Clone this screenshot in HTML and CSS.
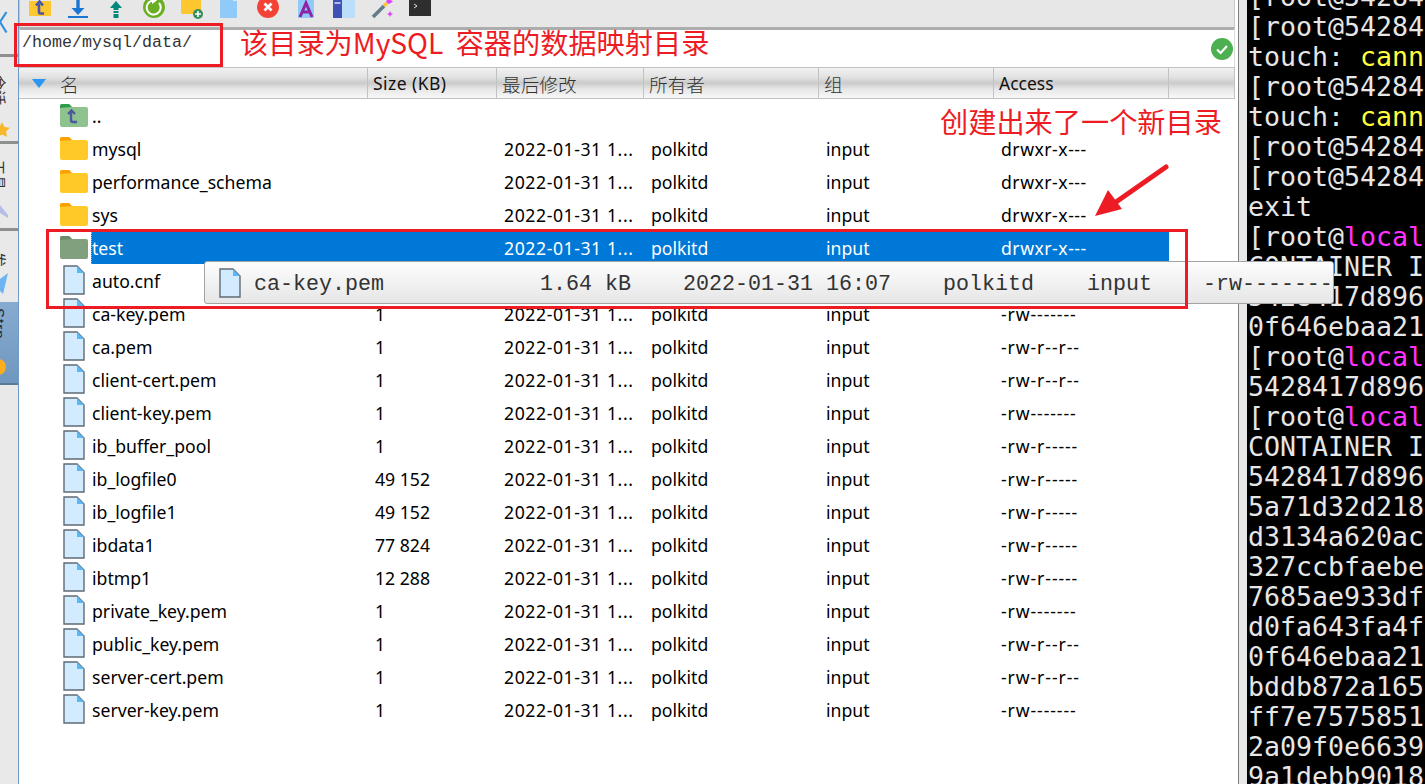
FILE: index.html
```html
<!DOCTYPE html>
<html lang="zh">
<head>
<meta charset="utf-8">
<title>FinalShell</title>
<link rel="stylesheet" href="styles.css">
</head>
<body>
<div class="app">
  <aside class="sidebar">
    <div class="tab tab-top">
      <svg class="tab-chevron" width="8" height="26" viewBox="0 0 8 26"><path d="M6.5 1 L0 11 L6.5 21.5" fill="none" stroke="#2f8fe0" stroke-width="2.2"/></svg>
    </div>
    <div class="tab tab-a">
      <span class="tab-label">会话</span>
      <svg class="tab-icon" width="14" height="18" viewBox="0 0 14 18"><path d="M2 0 L4.5 5 L10 5.8 L6 9.6 L7 15 L2 12.4 L-3 15 L-2 9.6 L-6 5.8 L-.5 5 Z" fill="#f7b928"/></svg>
    </div>
    <div class="tab tab-b">
      <span class="tab-label">工具</span>
      <svg class="tab-icon" width="18" height="22" viewBox="0 0 18 22"><path d="M0 2 L8 12 L8 15 L0 10 Z" fill="#b3bfe6"/></svg>
    </div>
    <div class="tab tab-c">
      <span class="tab-label">发</span>
      <svg class="tab-icon" width="18" height="24" viewBox="0 0 18 24"><path d="M8 1 L3 22 L0 19 L0 7 Z" fill="#6db4f2"/></svg>
    </div>
    <div class="tab-active">
      <span class="tab-label tab-label-latin">Strp</span>
      <span class="tab-dot"></span>
    </div>
  </aside>

  <main class="main">
    <div class="toolbar">
      <svg class="tool" width="22" height="22" viewBox="0 0 22 22"><path d="M0 5 H22 V19 a1 1 0 0 1 -1 1 H1 a1 1 0 0 1 -1 -1 Z" fill="#fdc82f"/><path d="M10 8 V16 a1.5 1.5 0 0 0 1.5 1.5 H15 M7 9.5 L10.5 5.5 L14 9.5" fill="none" stroke="#4a55a8" stroke-width="2.6"/></svg>
      <svg class="tool" width="22" height="22" viewBox="0 0 22 22"><path d="M11 3 V16" stroke="#1976d2" stroke-width="3.4"/><path d="M4.5 12 H17.5 L11 19 Z" fill="#1976d2"/><path d="M1 21 H21" stroke="#1976d2" stroke-width="2"/></svg>
      <svg class="tool" width="22" height="22" viewBox="0 0 22 22"><path d="M5 12 L11 5 L17 12 Z" fill="#00897b"/><path d="M8.5 12 H13.5 V14 H8.5 Z M8.5 15 H13.5 V17 H8.5 Z M8.5 18 H13.5 V22 H8.5 Z" fill="#00897b"/></svg>
      <svg class="tool" width="22" height="22" viewBox="0 0 22 22"><circle cx="11" cy="11" r="11" fill="#6aaf23"/><path d="M16 7 A7 7 0 1 1 10 4.6" fill="none" stroke="#fff" stroke-width="2"/><path d="M9 1 L14 4.6 L9 8 Z" fill="#fff"/></svg>
      <svg class="tool" width="22" height="22" viewBox="0 0 22 22"><path d="M0 0 H20 V17 a1 1 0 0 1 -1 1 H1 a1 1 0 0 1 -1 -1 Z" fill="#fdc82f"/><circle cx="17" cy="18" r="5" fill="#388e5a"/><path d="M14 18 H20 M17 15 V21" stroke="#fff" stroke-width="1.6"/></svg>
      <svg class="tool" width="22" height="22" viewBox="0 0 22 22"><path d="M1 0 H14 L18 5 V22 H1 Z" fill="#90caf9"/><path d="M14 0 L18 5 H14 Z" fill="#d5ebfc"/></svg>
      <svg class="tool" width="22" height="22" viewBox="0 0 22 22"><circle cx="11" cy="11" r="11" fill="#f44336"/><path d="M7.5 7.5 L14.5 14.5 M14.5 7.5 L7.5 14.5" stroke="#fff" stroke-width="2.8"/></svg>
      <svg class="tool" width="22" height="22" viewBox="0 0 22 22"><path d="M3 0 H16 L19 5 V22 H3 Z" fill="#90caf9"/><path d="M5 21 L11 7 L17 21 M7.5 16 H14.5" fill="none" stroke="#8e24aa" stroke-width="3"/></svg>
      <svg class="tool" width="22" height="22" viewBox="0 0 22 22"><rect x="0" y="0" width="22" height="22" fill="#bbdefb"/><rect x="0" y="0" width="9" height="22" fill="#3f51b5"/><path d="M1.5 7 H7.5" stroke="#fff" stroke-width="1.2"/></svg>
      <svg class="tool" width="22" height="22" viewBox="0 0 22 22"><path d="M2 21 L13 10" stroke="#607d8b" stroke-width="3.6"/><path d="M13 10 L16 7" stroke="#fdc82f" stroke-width="3.6"/><path d="M18 0 L19.5 4 L22 5.5 L18 8 L15 6 Z M19 15 L20 17 L22 18 L20 19 L19 21 L18 19 L16 18 L18 17 Z" fill="#e040fb"/></svg>
      <svg class="tool" width="22" height="22" viewBox="0 0 22 22"><rect x="0" y="0" width="22" height="20" fill="#2e2e2e"/><path d="M5 8 L8 10 L5 12" fill="none" stroke="#ddd" stroke-width="1"/></svg>
    </div>

    <div class="pathbar">
      <span class="path-text">/home/mysql/data/</span>
      <svg class="status" width="22" height="22" viewBox="0 0 22 22"><circle cx="11" cy="11" r="11" fill="#4caf50"/><path d="M6 11.5 L9.6 15 L16 8" fill="none" stroke="#fff" stroke-width="2.2"/></svg>
    </div>

    <div class="grid-row header">
      <div class="hcell hname"><span class="sort"></span><span class="cjk">名</span></div>
      <div class="hcell hsize">Size (KB)</div>
      <div class="hcell cjk">最后修改</div>
      <div class="hcell cjk">所有者</div>
      <div class="hcell cjk">组</div>
      <div class="hcell">Access</div>
      <div class="hcell hlast"></div>
    </div>

    <div class="list">
      <div class="grid-row row">
        <div class="name"><svg class="ficon" width="28" height="24" viewBox="0 0 28 24"><path d="M0 2 a2 2 0 0 1 2 -2 H9 L12 3 H26 a2 2 0 0 1 2 2 V21 a2 2 0 0 1 -2 2 H2 a2 2 0 0 1 -2 -2 Z" fill="#8ec28f"/><path d="M0 4 V2 a2 2 0 0 1 2 -2 H9 L12 3 Z" fill="#2e9e4a"/><path d="M11 8 V16 a2 2 0 0 0 2 2 H17 M8 10 L11.5 6.5 L15 10" fill="none" stroke="#4a5a9a" stroke-width="2.4"/></svg><span class="label">..</span></div>
        <div></div><div></div><div></div><div></div><div></div><div></div>
      </div>
      <div class="grid-row row">
        <div class="name"><svg class="ficon" width="28" height="24" viewBox="0 0 28 24"><use href="#folder"/></svg><span class="label">mysql</span></div>
        <div class="cell"></div><div class="cell date">2022-01-31 1...</div><div class="cell">polkitd</div><div class="cell">input</div><div class="cell perm">drwxr-x---</div><div></div>
      </div>
      <div class="grid-row row">
        <div class="name"><svg class="ficon" width="28" height="24" viewBox="0 0 28 24"><use href="#folder"/></svg><span class="label">performance_schema</span></div>
        <div class="cell"></div><div class="cell date">2022-01-31 1...</div><div class="cell">polkitd</div><div class="cell">input</div><div class="cell perm">drwxr-x---</div><div></div>
      </div>
      <div class="grid-row row">
        <div class="name"><svg class="ficon" width="28" height="24" viewBox="0 0 28 24"><use href="#folder"/></svg><span class="label">sys</span></div>
        <div class="cell"></div><div class="cell date">2022-01-31 1...</div><div class="cell">polkitd</div><div class="cell">input</div><div class="cell perm">drwxr-x---</div><div></div>
      </div>
      <div class="grid-row row selected">
        <div class="name"><svg class="ficon" width="28" height="24" viewBox="0 0 28 24"><path d="M0 2 a2 2 0 0 1 2 -2 H9 L12 3 H26 a2 2 0 0 1 2 2 V21 a2 2 0 0 1 -2 2 H2 a2 2 0 0 1 -2 -2 Z" fill="#80a07e"/><path d="M0 4 V2 a2 2 0 0 1 2 -2 H9 L12 3 Z" fill="#6f8a6a"/></svg><span class="label">test</span></div>
        <div class="cell"></div><div class="cell date">2022-01-31 1...</div><div class="cell">polkitd</div><div class="cell">input</div><div class="cell perm">drwxr-x---</div><div></div>
      </div>
      <div class="grid-row row">
        <div class="name file"><svg class="ficon" width="22" height="30" viewBox="0 0 22 30"><use href="#file"/></svg><span class="label">auto.cnf</span></div>
        <div class="cell">1</div><div class="cell date">2022-01-31 1...</div><div class="cell">polkitd</div><div class="cell">input</div><div class="cell perm">-rw-r-----</div><div></div>
      </div>
      <div class="grid-row row">
        <div class="name file"><svg class="ficon" width="22" height="30" viewBox="0 0 22 30"><use href="#file"/></svg><span class="label">ca-key.pem</span></div>
        <div class="cell">1</div><div class="cell date">2022-01-31 1...</div><div class="cell">polkitd</div><div class="cell">input</div><div class="cell perm">-rw-------</div><div></div>
      </div>
      <div class="grid-row row">
        <div class="name file"><svg class="ficon" width="22" height="30" viewBox="0 0 22 30"><use href="#file"/></svg><span class="label">ca.pem</span></div>
        <div class="cell">1</div><div class="cell date">2022-01-31 1...</div><div class="cell">polkitd</div><div class="cell">input</div><div class="cell perm">-rw-r--r--</div><div></div>
      </div>
      <div class="grid-row row">
        <div class="name file"><svg class="ficon" width="22" height="30" viewBox="0 0 22 30"><use href="#file"/></svg><span class="label">client-cert.pem</span></div>
        <div class="cell">1</div><div class="cell date">2022-01-31 1...</div><div class="cell">polkitd</div><div class="cell">input</div><div class="cell perm">-rw-r--r--</div><div></div>
      </div>
      <div class="grid-row row">
        <div class="name file"><svg class="ficon" width="22" height="30" viewBox="0 0 22 30"><use href="#file"/></svg><span class="label">client-key.pem</span></div>
        <div class="cell">1</div><div class="cell date">2022-01-31 1...</div><div class="cell">polkitd</div><div class="cell">input</div><div class="cell perm">-rw-------</div><div></div>
      </div>
      <div class="grid-row row">
        <div class="name file"><svg class="ficon" width="22" height="30" viewBox="0 0 22 30"><use href="#file"/></svg><span class="label">ib_buffer_pool</span></div>
        <div class="cell">1</div><div class="cell date">2022-01-31 1...</div><div class="cell">polkitd</div><div class="cell">input</div><div class="cell perm">-rw-r-----</div><div></div>
      </div>
      <div class="grid-row row">
        <div class="name file"><svg class="ficon" width="22" height="30" viewBox="0 0 22 30"><use href="#file"/></svg><span class="label">ib_logfile0</span></div>
        <div class="cell">49 152</div><div class="cell date">2022-01-31 1...</div><div class="cell">polkitd</div><div class="cell">input</div><div class="cell perm">-rw-r-----</div><div></div>
      </div>
      <div class="grid-row row">
        <div class="name file"><svg class="ficon" width="22" height="30" viewBox="0 0 22 30"><use href="#file"/></svg><span class="label">ib_logfile1</span></div>
        <div class="cell">49 152</div><div class="cell date">2022-01-31 1...</div><div class="cell">polkitd</div><div class="cell">input</div><div class="cell perm">-rw-r-----</div><div></div>
      </div>
      <div class="grid-row row">
        <div class="name file"><svg class="ficon" width="22" height="30" viewBox="0 0 22 30"><use href="#file"/></svg><span class="label">ibdata1</span></div>
        <div class="cell">77 824</div><div class="cell date">2022-01-31 1...</div><div class="cell">polkitd</div><div class="cell">input</div><div class="cell perm">-rw-r-----</div><div></div>
      </div>
      <div class="grid-row row">
        <div class="name file"><svg class="ficon" width="22" height="30" viewBox="0 0 22 30"><use href="#file"/></svg><span class="label">ibtmp1</span></div>
        <div class="cell">12 288</div><div class="cell date">2022-01-31 1...</div><div class="cell">polkitd</div><div class="cell">input</div><div class="cell perm">-rw-r-----</div><div></div>
      </div>
      <div class="grid-row row">
        <div class="name file"><svg class="ficon" width="22" height="30" viewBox="0 0 22 30"><use href="#file"/></svg><span class="label">private_key.pem</span></div>
        <div class="cell">1</div><div class="cell date">2022-01-31 1...</div><div class="cell">polkitd</div><div class="cell">input</div><div class="cell perm">-rw-------</div><div></div>
      </div>
      <div class="grid-row row">
        <div class="name file"><svg class="ficon" width="22" height="30" viewBox="0 0 22 30"><use href="#file"/></svg><span class="label">public_key.pem</span></div>
        <div class="cell">1</div><div class="cell date">2022-01-31 1...</div><div class="cell">polkitd</div><div class="cell">input</div><div class="cell perm">-rw-r--r--</div><div></div>
      </div>
      <div class="grid-row row">
        <div class="name file"><svg class="ficon" width="22" height="30" viewBox="0 0 22 30"><use href="#file"/></svg><span class="label">server-cert.pem</span></div>
        <div class="cell">1</div><div class="cell date">2022-01-31 1...</div><div class="cell">polkitd</div><div class="cell">input</div><div class="cell perm">-rw-r--r--</div><div></div>
      </div>
      <div class="grid-row row">
        <div class="name file"><svg class="ficon" width="22" height="30" viewBox="0 0 22 30"><use href="#file"/></svg><span class="label">server-key.pem</span></div>
        <div class="cell">1</div><div class="cell date">2022-01-31 1...</div><div class="cell">polkitd</div><div class="cell">input</div><div class="cell perm">-rw-------</div><div></div>
      </div>
    </div>
  </main>

  <div class="gutter"></div>

  <section class="terminal">
    <div>[root@54284</div>
    <div>[root@54284</div>
    <div>touch: <span class="yellow">cann</span></div>
    <div>[root@54284</div>
    <div>touch: <span class="yellow">cann</span></div>
    <div>[root@54284</div>
    <div>[root@54284</div>
    <div>exit</div>
    <div>[root@<span class="magenta">local</span></div>
    <div>CONTAINER I</div>
    <div>5428417d896</div>
    <div>0f646ebaa21</div>
    <div>[root@<span class="magenta">local</span></div>
    <div>5428417d896</div>
    <div>[root@<span class="magenta">local</span></div>
    <div>CONTAINER I</div>
    <div>5428417d896</div>
    <div>5a71d32d218</div>
    <div>d3134a620ac</div>
    <div>327ccbfaebe</div>
    <div>7685ae933df</div>
    <div>d0fa643fa4f</div>
    <div>0f646ebaa21</div>
    <div>bddb872a165</div>
    <div>ff7e7575851</div>
    <div>2a09f0e6639</div>
    <div>9a1debb9018</div>
  </section>
</div>

<div class="tooltip">
  <svg class="tip-icon" width="22" height="30" viewBox="0 0 22 30"><use href="#file"/></svg>
  <span class="tip-name">ca-key.pem</span>
  <span class="tip-size">1.64 kB</span>
  <span class="tip-date">2022-01-31 16:07</span>
  <span class="tip-owner">polkitd</span>
  <span class="tip-group">input</span>
  <span class="tip-perm">-rw-------</span>
</div>

<div class="mark mark-path"></div>
<div class="mark mark-row"></div>
<div class="note note-path">该目录为MySQL 容器的数据映射目录</div>
<div class="note note-new">创建出来了一个新目录</div>
<svg class="arrow" width="74" height="56" viewBox="0 0 74 56"><path d="M71 3 L21 38" stroke="#ed1c24" stroke-width="5" stroke-linecap="round"/><path d="M0 52 L13 26 L27 45 Z" fill="#ed1c24"/></svg>

<svg class="defs" width="0" height="0">
  <defs>
    <g id="folder">
      <path d="M0 2 a2 2 0 0 1 2 -2 H9 L12 3 H26 a2 2 0 0 1 2 2 V21 a2 2 0 0 1 -2 2 H2 a2 2 0 0 1 -2 -2 Z" fill="#ffca28"/>
      <path d="M0 4 V2 a2 2 0 0 1 2 -2 H9 L12 3 Z" fill="#ffa000"/>
    </g>
    <g id="file">
      <path d="M1 1 H14 L21 8 V29 H1 Z" fill="#d2ebff" stroke="#5f6b75" stroke-width="1.4"/>
      <path d="M14 1 L21 8 H14 Z" fill="#5ab8f5"/>
    </g>
  </defs>
</svg>
</body>
</html>
```

FILE: styles.css
```css
* { box-sizing: border-box; }

html, body {
  margin: 0;
  height: 784px;
  overflow: hidden;
  background: #fff;
}

body {
  position: relative;
  font-family: "Noto Sans", "Noto Sans CJK SC", sans-serif;
  font-size: 17.65px;
  color: #000;
}

.app {
  display: flex;
  width: 1425px;
  height: 784px;
  overflow: hidden;
}

/* left tab strip */
.sidebar {
  flex: 0 0 19px;
  display: flex;
  flex-direction: column;
  background: #e9e9e9;
  border-right: 1px solid #6f9ac7;
  overflow: hidden;
}

.tab {
  position: relative;
  border-bottom: 3px solid #8f8f8f;
  display: flex;
  flex-direction: column;
  align-items: flex-start;
  overflow: hidden;
  flex: none;
}

.tab-top { height: 57px; padding-top: 11px; }
.tab-a { height: 87px; padding-top: 18px; }
.tab-b { height: 87px; padding-top: 16px; }
.tab-c { height: 71px; padding-top: 21px; border-bottom: 0; }

.tab-label {
  writing-mode: vertical-rl;
  text-orientation: sideways;
  font-family: "Noto Sans CJK SC", sans-serif;
  font-size: 15px;
  line-height: 15px;
  width: 15px;
  height: 30px;
  flex: none;
  color: #333;
  margin-left: -8px;
  overflow: hidden;
}

.tab-icon { flex: none; }
.tab-a .tab-icon { margin-top: 17px; }
.tab-b .tab-label { height: 37px; }
.tab-b .tab-icon { margin-top: 6px; }
.tab-c .tab-label { height: 17px; }
.tab-c .tab-icon { margin-top: 3px; }

.tab-active {
  height: 83px;
  flex: none;
  background: linear-gradient(#87abd0, #7097bf);
  border-bottom: 2px solid #5a7a9c;
  padding-top: 6px;
  position: relative;
  overflow: hidden;
}

.tab-label-latin {
  display: block;
  font-family: "Liberation Sans", sans-serif;
  height: 42px;
  color: #222;
  letter-spacing: 1px;
}

.tab-dot {
  display: block;
  width: 16px;
  height: 16px;
  margin: 9px 0 0 -10px;
  border-radius: 50%;
  background: #fcae1e;
}

/* main panel */
.main {
  flex: 0 0 1220px;
  padding-right: 3px;
  background: #fff;
  border-right: 1px solid #7d7d7d;
  display: flex;
  flex-direction: column;
}

.toolbar {
  height: 27px;
  flex: none;
  display: flex;
  gap: 16px;
  padding-left: 9px;
  background: #e7e7e7;
  border-left: 1px solid #c4c4c4;
  border-right: 1px solid #c9c9c9;
  overflow: hidden;
  align-items: flex-start;
}

.tool {
  flex: none;
  margin-top: -4px;
  overflow: visible;
}

.pathbar {
  height: 40px;
  flex: none;
  display: flex;
  justify-content: space-between;
  align-items: center;
  padding: 0 1px 0 2px;
  border-top: 3px solid #adadad;
  border-left: 1px solid #dcdcdc;
  border-right: 1px solid #dcdcdc;
}

.path-text {
  font-family: "Liberation Mono", monospace;
  font-size: 16.67px;
  color: #333;
  align-self: flex-start;
  line-height: 20px;
  margin-top: 3px;
}

.status { margin-top: 1px; }

.grid-row {
  display: grid;
  grid-template-columns: 349px 129px 147px 175px 175px 175px 1fr;
}

.header {
  height: 32px;
  flex: none;
  border-top: 1px solid #c2c2c2;
  border-bottom: 1px solid #c2c2c2;
  background: linear-gradient(#f2f2f2 0%, #e2e2e2 30%, #cbcbcb 50%, #e6e6e6 70%, #f8f8f8 100%);
}

.hcell {
  display: flex;
  align-items: center;
  padding: 0 0 0 5px;
  border-right: 1px solid #c2c2c2;
  font-size: 17.5px;
  color: #111;
}

.hsize { letter-spacing: .45px; }

.hname { padding-left: 13px; gap: 14px; }
.hlast { border-right: 1px solid #c2c2c2; }

.cjk {
  font-family: "Noto Sans CJK SC", sans-serif;
  font-weight: 300;
  font-size: 18.7px;
  color: #333;
}

.sort {
  width: 0;
  height: 0;
  border-left: 7.5px solid transparent;
  border-right: 7.5px solid transparent;
  border-top: 9px solid #2b96f1;
}

.list {
  padding-top: 1px;
  flex: 1;
}

.row {
  height: 33px;
  align-items: stretch;
}

.name {
  display: flex;
  align-items: center;
  padding-left: 41px;
}

.name.file { padding-left: 44px; }

.ficon { flex: none; margin-top: -2px; }
.name.file .ficon { margin-top: -4px; }

.label {
  flex: 1;
  height: 32px;
  line-height: 32px;
  padding-left: 4px;
  margin-top: -1px;
}

.name.file .label { padding-left: 7px; }

.cell {
  line-height: 33px;
  padding-left: 7px;
  white-space: nowrap;
}

.date { letter-spacing: .57px; }
.perm { letter-spacing: .5px; }
.name.file ~ .perm { letter-spacing: .9px; }

.selected .label,
.selected .cell {
  background: #0078d7;
  color: #fff;
  height: 32px;
}

.selected .cell { line-height: 32px; }

.selected .label {
  margin-left: 3px;
  padding-left: 0;
  margin-top: 0;
  line-height: 32px;
  align-self: flex-start;
  border-left: 1px dotted #d9a066;
}

/* terminal */
.gutter {
  flex: 0 0 8px;
  background: #e8e8e8;
}

.terminal {
  flex: 1;
  background: #000;
  color: #e6e6e6;
  font-family: "DejaVu Sans Mono", monospace;
  font-size: 26.6px;
  line-height: 30px;
  white-space: nowrap;
  overflow: hidden;
  padding-left: 1px;
  margin-top: -18px;
  height: 810px;
}

.yellow { color: #ffff3c; }
.magenta { color: #ff32ff; }

/* overlays */
.tooltip {
  position: absolute;
  left: 204px;
  top: 261px;
  width: 1130px;
  height: 43px;
  display: flex;
  align-items: center;
  padding: 0 0 0 14px;
  border: 1px solid #a3a3a3;
  border-radius: 3px;
  background: linear-gradient(#fdfdfd, #e6e6e6);
  font-family: "Liberation Mono", monospace;
  font-size: 21.67px;
  color: #333;
  white-space: pre;
}

.tooltip span { padding-top: 3px; }

.tip-icon { flex: none; margin-right: 13px; }
.tip-name { width: 130px; }
.tip-size { width: 247px; text-align: right; }
.tip-date { margin-left: 52px; }
.tip-owner { margin-left: 52px; }
.tip-group { margin-left: 53px; }
.tip-perm { margin-left: 51px; }

.mark {
  position: absolute;
  border: 3px solid #ed1c24;
}

.mark-path { left: 14px; top: 23px; width: 209px; height: 44px; }
.mark-row { left: 46px; top: 229px; width: 1142px; height: 80px; }

.note {
  position: absolute;
  color: #ed1c24;
  font-family: "Noto Sans CJK SC", sans-serif;
  font-size: 28.2px;
  line-height: 36px;
  white-space: nowrap;
}

.note-path { left: 240px; top: 24px; word-spacing: 6px; }
.note-new { left: 940px; top: 103px; }

.arrow { position: absolute; left: 1095px; top: 164px; }
.defs { position: absolute; }
```
